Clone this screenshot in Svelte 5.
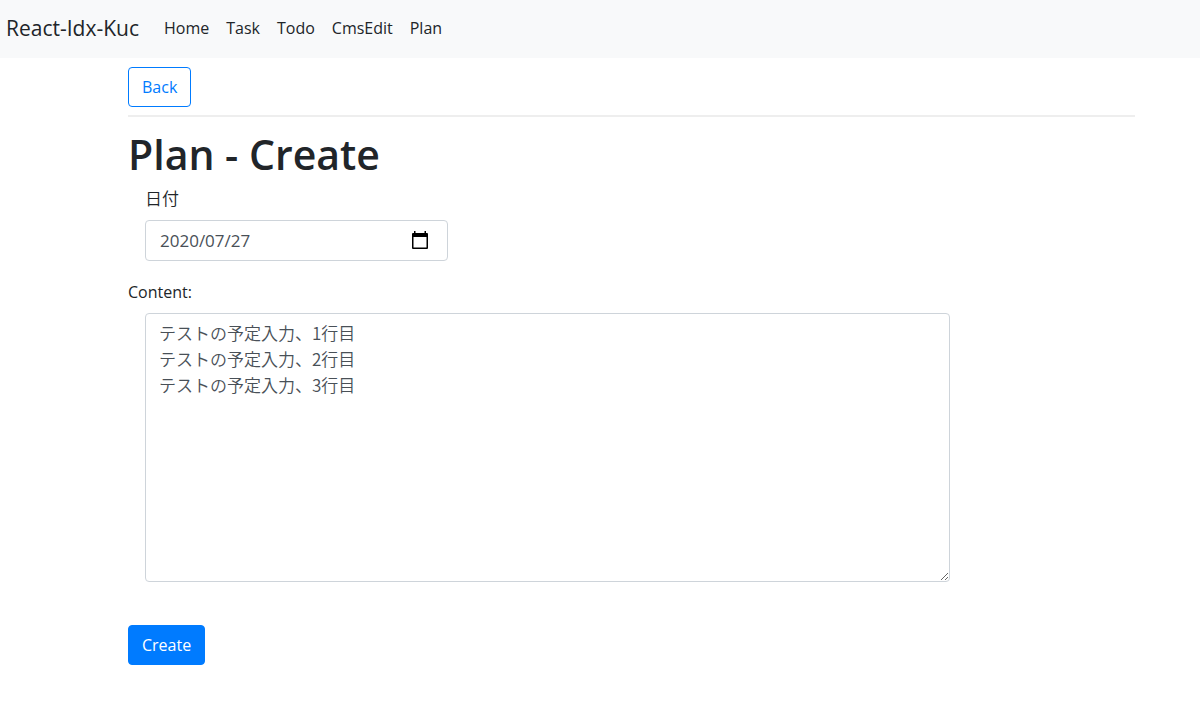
<script lang="ts">
	let title = 'Plan - Create';
	let planDate = $state('2020/07/27');
	let content = $state('テストの予定入力、1行目\nテストの予定入力、2行目\nテストの予定入力、3行目');

	const links = ['Home', 'Task', 'Todo', 'CmsEdit', 'Plan'];
</script>

<nav class="navbar">
	<a class="brand" href="#/">React-Idx-Kuc</a>
	<ul class="nav-list">
		{#each links as link}
			<li><a href="#/{link.toLowerCase()}">{link}</a></li>
		{/each}
	</ul>
</nav>

<main class="container">
	<button type="button" class="btn btn-outline">Back</button>
	<hr />
	<h1>{title}</h1>
	<form onsubmit={(e) => e.preventDefault()}>
		<div class="form-group indent">
			<label class="date-label" for="plan-date">日付</label>
			<div class="control date-control">
				<input id="plan-date" type="text" bind:value={planDate} />
				<button type="button" class="picker" aria-label="Open calendar">
					<svg width="18" height="20" viewBox="0 0 18 20">
						<path
							fill="#000"
							fill-rule="evenodd"
							d="M3 0h1.500v2h9V0H15v2h1a1 1 0 0 1 1 1v14a1 1 0 0 1-1 1H2a1 1 0 0 1-1-1V3a1 1 0 0 1 1-1h1zM2.500 6v10.500h13V6z"
						/>
					</svg>
				</button>
			</div>
		</div>
		<div class="form-group">
			<label for="plan-content">Content:</label>
			<div class="indent">
				<textarea id="plan-content" class="control" rows="10" bind:value={content}></textarea>
			</div>
		</div>
		<button type="submit" class="btn btn-primary">Create</button>
	</form>
</main>

<style>
	:global(body) {
		background: #fff;
		color: #212529;
		font-family: 'Open Sans', 'Noto Sans CJK JP', sans-serif;
		font-size: 16px;
		line-height: 26px;
	}

	.navbar {
		display: flex;
		align-items: center;
		box-sizing: border-box;
		min-height: 58px;
		padding: 7px 6px 9px;
		background: #f8f9fa;
	}

	.navbar a {
		color: #212529;
		text-decoration: none;
	}

	.navbar .brand {
		margin-right: 25px;
		font-size: 21px;
	}

	.nav-list {
		display: flex;
		gap: 17px;
		margin: 0;
		padding: 0;
		list-style: none;
	}

	.container {
		padding: 9px 65px 32px 128px;
	}

	.btn {
		display: block;
		box-sizing: border-box;
		height: 40px;
		padding: 0 13px;
		border: 1px solid #007bff;
		border-radius: 4px;
		font: inherit;
		cursor: pointer;
	}

	.btn-outline {
		background: #fff;
		color: #007bff;
	}

	.btn-primary {
		margin-top: 43px;
		background: #007bff;
		color: #fff;
	}

	hr {
		margin: 8px 0 12px;
		border: 0;
		border-top: 2px solid #eee;
	}

	h1 {
		margin: 0 0 7px;
		font-size: 41px;
		font-weight: 600;
		line-height: 50px;
	}

	.form-group {
		margin-bottom: 18px;
	}

	.indent {
		margin-left: 17px;
	}

	label {
		display: block;
		margin-bottom: 8px;
	}

	.date-label {
		font-size: 17px;
		font-weight: 350;
	}

	.control {
		box-sizing: border-box;
		border: 1px solid #ced4da;
		border-radius: 4px;
		background: #fff;
		color: #495057;
		font-size: 17px;
	}

	.date-control {
		display: flex;
		align-items: center;
		width: 30.6%;
		height: 41px;
		padding: 0 18px 0 14px;
	}

	.date-control input {
		flex: 1;
		min-width: 0;
		padding: 0;
		border: 0;
		outline: 0;
		background: none;
		color: inherit;
		font: inherit;
	}

	.picker {
		display: flex;
		padding: 0;
		border: 0;
		background: none;
		cursor: pointer;
	}

	textarea {
		display: block;
		width: 81.3%;
		height: 269px;
		padding: 6px 13px;
		font-family: 'Noto Sans CJK JP', 'Open Sans', sans-serif;
		font-weight: 350;
		line-height: 26px;
		resize: both;
	}
</style>
